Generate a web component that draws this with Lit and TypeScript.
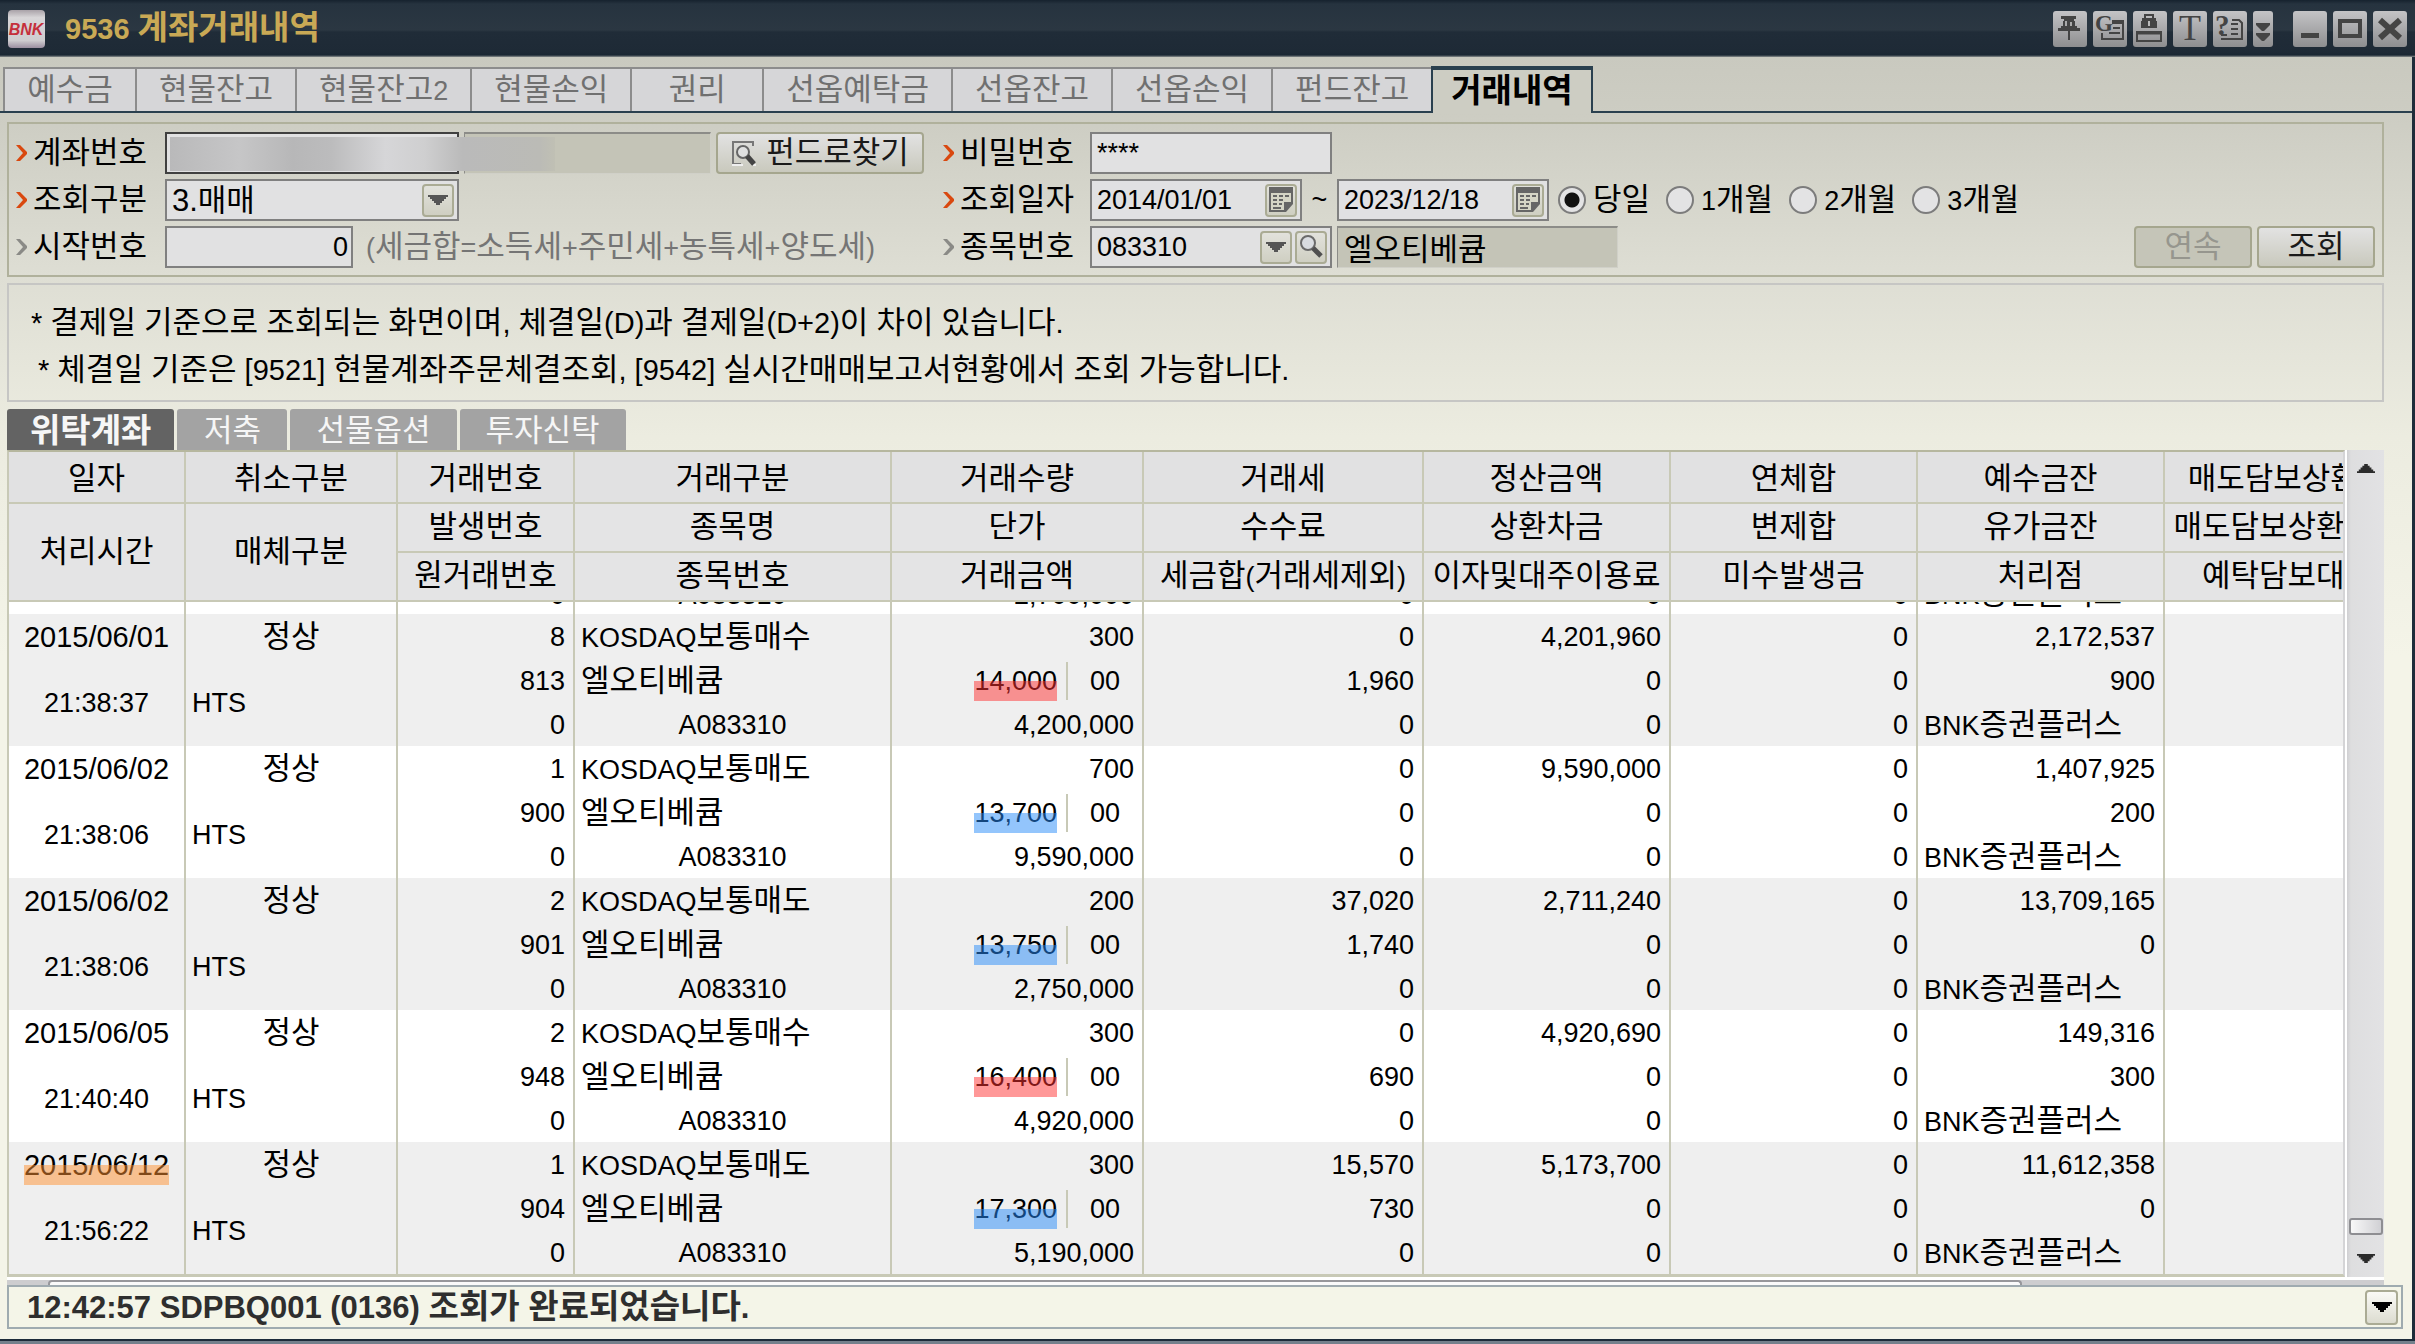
import { LitElement, html, svg, css, nothing } from "lit";
import { customElement, state } from "lit/decorators.js";
import { classMap } from "lit/directives/class-map.js";

interface Trade {
  date: string;
  time: string;
  nos: [string, string, string];
  kind: string;
  qty: string;
  price: string;
  side: "buy" | "sell";
  amount: string;
  tax: string;
  fee: string;
  settle: string;
  deposit: string;
  stock: string;
  marked?: boolean;
}

const TRADES: Trade[] = [
  { date: "2015/06/01", time: "21:38:37", nos: ["8", "813", "0"], kind: "KOSDAQ보통매수", qty: "300", price: "14,000", side: "buy", amount: "4,200,000", tax: "0", fee: "1,960", settle: "4,201,960", deposit: "2,172,537", stock: "900" },
  { date: "2015/06/02", time: "21:38:06", nos: ["1", "900", "0"], kind: "KOSDAQ보통매도", qty: "700", price: "13,700", side: "sell", amount: "9,590,000", tax: "0", fee: "0", settle: "9,590,000", deposit: "1,407,925", stock: "200" },
  { date: "2015/06/02", time: "21:38:06", nos: ["2", "901", "0"], kind: "KOSDAQ보통매도", qty: "200", price: "13,750", side: "sell", amount: "2,750,000", tax: "37,020", fee: "1,740", settle: "2,711,240", deposit: "13,709,165", stock: "0" },
  { date: "2015/06/05", time: "21:40:40", nos: ["2", "948", "0"], kind: "KOSDAQ보통매수", qty: "300", price: "16,400", side: "buy", amount: "4,920,000", tax: "0", fee: "690", settle: "4,920,690", deposit: "149,316", stock: "300" },
  { date: "2015/06/12", time: "21:56:22", nos: ["1", "904", "0"], kind: "KOSDAQ보통매도", qty: "300", price: "17,300", side: "sell", amount: "5,190,000", tax: "15,570", fee: "730", settle: "5,173,700", deposit: "11,612,358", stock: "0", marked: true },
];

const TABS = ["예수금", "현물잔고", "현물잔고2", "현물손익", "권리", "선옵예탁금", "선옵잔고", "선옵손익", "펀드잔고", "거래내역"];
const ACCOUNT_TABS = ["위탁계좌", "저축", "선물옵션", "투자신탁"];
const PERIODS = ["당일", "1개월", "2개월", "3개월"];

/* Hangul runs are set a little larger than the Latin letters and digits beside them. */
const mix = (text: string) =>
  text.split(/([\u3131-\uD79D]+)/).filter(Boolean).map((run) =>
    /[\u3131-\uD79D]/.test(run) ? html`<span class="ko">${run}</span>` : run
  );

const chevron = html`<svg class="chevron" viewBox="0 0 12 18" aria-hidden="true">
  <path d="M0 1H4L11 8V10L4 17H0L7 9Z" fill="currentColor" />
</svg>`;

const triangle = html`<svg class="tri" viewBox="0 0 20 12" aria-hidden="true">
  <path d="M0 1H20V3H18V5H16V7H14V9H12V11H8V9H6V7H4V5H2V3H0Z" fill="currentColor" />
</svg>`;

const calendar = html`<svg class="ico" viewBox="0 0 24 26" aria-hidden="true">
  <path d="M0 0H24V17L17 25H0Z" fill="#666" />
  <path d="M2 6H22V15H15V23H2Z" fill="#d5d5c6" />
  <path d="M4 9h4M10 9h4M16 9h4M4 13h4M10 13h4M4 17h4M10 17h3M4 21h8" stroke="#666" stroke-width="2" />
  <path d="M15 24V17H21Z" fill="#666" />
</svg>`;

const lens = html`<svg class="ico" viewBox="0 0 24 26" aria-hidden="true">
  <circle cx="9" cy="9" r="7" fill="#d9dce0" stroke="#6a6a6a" stroke-width="2" />
  <path d="M14 14L22 22" stroke="#505050" stroke-width="5" />
</svg>`;

const pageLens = html`<svg class="page" viewBox="0 0 26 26" aria-hidden="true">
  <path d="M22 6V2H2V24H10" fill="none" stroke="#777" stroke-width="2" />
  <path d="M1 25H12M22 25H25" stroke="#eee" stroke-width="2" />
  <circle cx="12" cy="12" r="6" fill="#dfe0e0" stroke="#666" stroke-width="2" />
  <path d="M16 16L23 24" stroke="#444" stroke-width="5" />
</svg>`;

const TOOLS = [
  { name: "고정", art: svg`<path d="M8 5H23V8H21V10H22V15H24V17H27V20H5V17H8V15H10V10H11V8H8Z" fill="#444"/><path d="M16 20V29" stroke="#444" stroke-width="2"/><path d="M13 10V15M18 11V15" stroke="#aaa" stroke-width="2"/>` },
  { name: "그룹", art: svg`<text x="2" y="20" class="glyph" font-size="23" font-weight="700">G</text><path d="M19 9H31V13H19Z" fill="#444"/><path d="M30 11V28H9V22" fill="none" stroke="#444" stroke-width="2"/><path d="M20 17H27M16 22H27" stroke="#444" stroke-width="2"/>` },
  { name: "잠금", art: svg`<path d="M12 8V4H20V8" fill="none" stroke="#444" stroke-width="2"/><path d="M9 7H23V10H24V17H8V10H9Z" fill="#444"/><path d="M16 10V15" stroke="#bbb" stroke-width="2"/><path d="M4 21H28V30H4Z" fill="none" stroke="#444" stroke-width="2"/><path d="M4 22H28" stroke="#444" stroke-width="3"/>` },
  { name: "글꼴", art: svg`<text x="17" y="29" class="glyph" font-size="36" text-anchor="middle">T</text>` },
  { name: "도움말", art: svg`<text x="2" y="24" class="glyph" font-size="29" font-weight="700">?</text><path d="M19 9H26L29 12V28H8" fill="none" stroke="#444" stroke-width="2"/><path d="M18 13H25M18 18H25M18 23H25M8 24H14" stroke="#444" stroke-width="2"/>` },
];

const WINDOW_TOOLS = [
  { name: "최소화", art: svg`<path d="M8 22H26V27H8Z" fill="#444"/>` },
  { name: "최대화", art: svg`<path d="M7 10H27V25H7Z" fill="none" stroke="#444" stroke-width="4"/>` },
  { name: "닫기", art: svg`<path d="M7 9L27 27M27 9L7 27" stroke="#444" stroke-width="6"/>` },
];

@customElement("app-root")
export class AppRoot extends LitElement {
  @state() private period = 0;
  @state() private accountTab = 0;

  static styles = css`
    :host {
      display: flex;
      flex-direction: column;
      box-sizing: border-box;
      min-height: 100vh;
      overflow: hidden;
      color: #000;
      font: 27px/44px "Liberation Sans", "Noto Sans CJK KR", sans-serif;
      white-space: nowrap;
      border-bottom: 3px solid #74808c;
    }
    * { box-sizing: border-box; }
    .ko { font-size: 31px; }
    button, input, select {
      font: inherit;
      color: inherit;
      margin: 0;
      padding: 0;
      border-radius: 0;
    }
    .bar {
      display: flex;
      align-items: center;
      height: 57px;
      padding: 0 8px;
      gap: 6px;
      background: linear-gradient(#16222e 0, #26333f 4px, #2b3742 30px, #202c38 32px, #1e2a36 52px, #1a2733 55px, #8a8f8e 57px);
    }
    .logo { width: 37px; height: 38px; }
    .title {
      flex: 1;
      margin: 0 0 0 14px;
      font-size: 29px;
      font-weight: 700;
      color: #c9a955;
    }
    .title .ko, .tab.on .ko, .sub.on .ko, .status .ko { font-size: 33px; }
    .tool {
      width: 34px;
      height: 36px;
      border: 0;
      border-radius: 3px;
      background: linear-gradient(#c4c4c6, #8e8e90);
    }
    .tool svg { display: block; width: 34px; height: 36px; }
    .tool.slim { width: 20px; margin-right: 14px; }
    .tool.slim svg { width: 20px; }
    .glyph { font-family: "Liberation Serif", serif; fill: #444; }

    .frame {
      flex: 1;
      display: flex;
      flex-direction: column;
      border-right: 3px solid #1e2c3a;
      border-bottom: 2px solid #1e2c3a;
      background: linear-gradient(#c9c9bf 0, #cdcdc3 60px, #deded4 220px, #ecece0 380px, #f4f4e8 600px);
    }
    .tabs { display: flex; height: 56px; padding: 10px 0 0 3px; background: linear-gradient(#2a404f, #2a404f) 0 100% / 100% 2px no-repeat; }
    .tab {
      min-width: 132px;
      padding: 0 22px;
      border: solid #8c8c8c;
      border-width: 2px 0 0 2px;
      margin-bottom: 2px;
      background: #d6d6d8;
      color: #707070;
      line-height: 40px;
    }
    .tab.on {
      padding: 0 18px;
      margin: -1px 0 0;
      border: solid #2a404f;
      border-width: 4px 2px 0;
      background: #cdcdc3;
      color: #000;
      font-weight: 700;
    }

    .main { flex: 1; display: flex; flex-direction: column; padding: 9px 28px 0 7px; }
    .form {
      display: flex;
      gap: 19px;
      padding: 8px 7px 7px;
      border: 2px solid #b0b19c;
    }
    .side { display: grid; grid-auto-rows: 42px; gap: 5px; }
    .line { display: flex; align-items: center; gap: 5px; line-height: 38px; }
    .label { display: flex; align-items: center; gap: 5px; width: 144px; }
    .side + .side .label { width: 142px; }
    .chevron { width: 12px; height: 18px; color: #d9480f; }
    .muted .chevron { color: #8a8a86; }
    .box {
      display: flex;
      align-items: center;
      gap: 3px;
      height: 42px;
      padding: 0 3px 0 5px;
      border: 2px solid #808080;
      background: #e1e1e2;
    }
    .box input, .box select {
      flex: 1;
      min-width: 0;
      height: 36px;
      border: 0;
      background: none;
      appearance: none;
      outline: 0;
    }
    .box select { font-size: 31px; }
    .w294 { width: 294px; }
    .w242 { width: 242px; }
    .w212 { width: 212px; }
    .w188 { width: 188px; }
    .dark { border-color: #404040; }
    .num { text-align: right; }
    .still {
      height: 42px;
      padding: 0 6px 3px;
      border: solid #8c8c88;
      border-width: 2px 1px 1px;
      border-right-color: #d0d0c8;
      border-bottom-color: #d0d0c8;
      background: #c4c4b7;
      outline: 0;
    }
    .still.a { width: 247px; }
    .still.b { width: 281px; font-size: 31px; }
    .account { position: relative; }
    .veil {
      position: absolute;
      left: 154px;
      top: 5px;
      width: 385px;
      height: 34px;
      pointer-events: none;
      background: linear-gradient(90deg, #b9b9ba, #c6c6c7 18%, #b7b7b8 32%, #bcbcbd 42%, #d6d6d8 56%, #cfcfd0 66%, #bababa 76%, #bbbbb6 96%, #c0c0b4);
    }
    .mini {
      display: grid;
      place-items: center;
      width: 32px;
      height: 33px;
      border: 2px solid #aaab94;
      border-radius: 4px;
      background: linear-gradient(#e2e2dc, #cfcfc2);
      color: #555;
    }
    .mini.fat { width: 33px; height: 35px; }
    .tri { display: block; width: 20px; height: 12px; }
    .ico { display: block; width: 24px; height: 26px; }
    .page { width: 26px; height: 26px; }
    .btn {
      display: flex;
      align-items: center;
      justify-content: center;
      gap: 9px;
      height: 42px;
      width: 118px;
      border: 2px solid #a5a68e;
      border-radius: 4px;
      background: linear-gradient(#e2e2e2, #c9c9bd);
      color: #1a1a1a;
    }
    .btn.wide { width: 208px; }
    .btn:disabled { background: #c5c5b8; color: #96968e; }
    .hint { margin-left: 8px; color: #757575; }
    .tilde { width: 25px; text-align: center; }
    .radios { display: flex; gap: 16px; margin: 0 0 0 4px; padding: 0; border: 0; }
    .radio { display: flex; align-items: center; gap: 7px; }
    .radio input {
      appearance: none;
      width: 28px;
      height: 28px;
      border: 2px solid #7c7c7c;
      border-radius: 50%;
      background: #e3e3e4;
    }
    .radio input:checked { background: radial-gradient(circle, #111 7px, #e3e3e4 8px); }
    .go { display: flex; gap: 5px; margin-left: auto; align-self: flex-end; }

    .note {
      margin-top: 6px;
      padding: 14px 22px 7px;
      border: 2px solid #c6c6c4;
      font-size: 29px;
      line-height: 47px;
    }
    .note p { margin: 0; height: 47px; }
    .note p + p { padding-left: 7px; }

    .subs { display: flex; gap: 3px; margin-top: 7px; }
    .sub {
      min-width: 110px;
      height: 41px;
      padding: 3px 26px 0;
      border: 0;
      border-radius: 3px 3px 0 0;
      background: #a3a3a3;
      color: #f6f6f6;
      line-height: 38px;
    }
    .sub.on { padding: 3px 23px 0; background: #636363; font-weight: 700; }

    .grid { display: flex; gap: 2px; background: #fff; }
    .scroller {
      flex: 1;
      min-width: 0;
      overflow: hidden;
      border: solid #c8c9b6;
      border-width: 2px 2px 3px;
      border-top-color: #b6b79f;
      border-right-color: #d4d4d6;
    }
    table { width: 2403px; table-layout: fixed; border-spacing: 0; }
    th, td { padding: 0; border-right: 2px solid #c8c9b6; overflow: hidden; text-align: center; }
    th {
      height: 49px;
      border-bottom: 2px solid #c8c9b6;
      background: #e4e4e5;
      font-weight: 400;
      line-height: 42px;
    }
    .top th { height: 52px; padding-top: 4px; background: #e1e1e2; }
    td { height: 44px; padding-top: 2px; line-height: 38px; background: #fff; }
    .odd td { background: #efefef; }
    td.r { text-align: right; padding-right: 8px; }
    td.l { text-align: left; padding-left: 6px; }
    td.date { font-size: 29px; }
    .rest td { height: 12px; padding-top: 0; }
    .tail { display: flex; flex-direction: column; justify-content: flex-end; height: 12px; overflow: hidden; line-height: 38px; }
    .price { display: flex; justify-content: flex-end; }
    .unit { width: 76px; margin-left: 9px; border-left: 2px solid #c8c9b6; text-align: center; }
    .mark { position: relative; display: inline-block; }
    .mark::after {
      content: "";
      position: absolute;
      left: 0;
      right: 0;
      top: 50%;
      height: 20px;
    }
    .buy::after { background: rgba(255, 50, 50, 0.5); }
    .sell::after { background: rgba(40, 140, 250, 0.5); }
    .day::after { background: rgba(255, 145, 50, 0.5); }

    .vbar {
      display: flex;
      flex-direction: column;
      align-items: center;
      justify-content: space-between;
      width: 37px;
      padding: 12px 0 13px;
      background: linear-gradient(90deg, #cfcfd2, #dededf 4px, #e2e2e4);
    }
    .vbar button { padding: 0; border: 0; background: none; color: #2b2b2b; height: 12px; }
    .vbar .tri { width: 18px; height: 11px; }
    .up .tri { transform: rotate(180deg); }
    .vthumb {
      width: 34px;
      height: 17px;
      margin: auto 0 17px;
      border: 2px solid #8e8e92;
      border-radius: 3px;
      background: linear-gradient(90deg, #f8f8f8, #d0d0d4);
    }
    .hbar { display: flex; height: 8px; padding: 3px 41px 0 41px; background: linear-gradient(#fff 3px, #cdcdcf 3px); }
    .hthumb { width: 86%; border: 1px solid #97979b; border-width: 2px 2px 0; border-radius: 4px 4px 0 0; background: #fafafa; }

    .status {
      display: flex;
      align-items: center;
      justify-content: space-between;
      height: 44px;
      margin: 0 9px 10px 7px;
      padding: 0 3px 0 18px;
      border: 2px solid #9fabb0;
      background: #f4f5e8;
      color: #2e2e2e;
      font-size: 31px;
      font-weight: 700;
      line-height: 40px;
    }
    .status .mini { color: #000; background: linear-gradient(#fafaf6, #dcdcd0); }
  `;

  private label(id: string, text: string, muted = false) {
    return html`<label class=${classMap({ label: true, muted })} for=${id}>${chevron}<span class="ko">${text}</span></label>`;
  }

  private tools(list: typeof TOOLS) {
    return list.map((t) => html`<button class="tool" aria-label=${t.name}><svg viewBox="0 0 34 36">${t.art}</svg></button>`);
  }

  private renderBar() {
    return html`<header class="bar">
      <svg class="logo" viewBox="0 0 37 38" role="img" aria-label="BNK">
        <defs><linearGradient id="lg" x1="0" y1="0" x2="0" y2="1">
          <stop offset="0" stop-color="#a9a2a8" /><stop offset=".2" stop-color="#d8d6d8" />
          <stop offset=".8" stop-color="#cfcdd0" /><stop offset="1" stop-color="#9b8ea0" />
        </linearGradient></defs>
        <rect width="37" height="38" rx="4" fill="url(#lg)" />
        <text x="18" y="25" text-anchor="middle" font-family="Liberation Sans" font-size="16" font-weight="700" font-style="italic" fill="#c5303c">BNK</text>
      </svg>
      <h1 class="title">${mix("9536 계좌거래내역")}</h1>
      ${this.tools(TOOLS)}
      <button class="tool slim" aria-label="더보기"><svg viewBox="0 0 20 36">
        <path d="M3 12H17V14L11 20H9L3 14ZM3 22H17V24L11 30H9L3 24Z" fill="#444" />
      </svg></button>
      ${this.tools(WINDOW_TOOLS)}
    </header>`;
  }

  private renderForm() {
    return html`<form class="form" @submit=${(e: Event) => e.preventDefault()}>
      <div class="side">
        <div class="line account">
          ${this.label("account", "계좌번호")}
          <div class="box dark w294"><input id="account" type="text" /></div>
          <input class="still a" aria-label="계좌명" readonly />
          <button class="btn wide" type="button">${pageLens}<span class="ko">펀드로찾기</span></button>
          <div class="veil"></div>
        </div>
        <div class="line">
          ${this.label("kind", "조회구분")}
          <div class="box w294">
            <select id="kind"><option>3.매매</option></select>
            <span class="mini">${triangle}</span>
          </div>
        </div>
        <div class="line">
          ${this.label("start", "시작번호", true)}
          <div class="box w188"><input id="start" class="num" type="text" value="0" /></div>
          <span class="hint">${mix("(세금합=소득세+주민세+농특세+양도세)")}</span>
        </div>
      </div>
      <div class="side">
        <div class="line">
          ${this.label("pass", "비밀번호")}
          <div class="box w242"><input id="pass" type="text" value="****" /></div>
        </div>
        <div class="line">
          ${this.label("from", "조회일자")}
          <div class="box w212"><input id="from" type="text" value="2014/01/01" /><button type="button" class="mini" aria-label="시작일 달력">${calendar}</button></div>
          <span class="tilde">~</span>
          <div class="box w212"><input aria-label="종료일" type="text" value="2023/12/18" /><button type="button" class="mini" aria-label="종료일 달력">${calendar}</button></div>
          <fieldset class="radios" aria-label="조회기간">
            ${PERIODS.map((p, i) => html`<label class="radio">
              <input type="radio" name="period" .checked=${this.period === i} @change=${() => (this.period = i)} />
              <span>${mix(p)}</span>
            </label>`)}
          </fieldset>
        </div>
        <div class="line">
          ${this.label("code", "종목번호", true)}
          <div class="box w242">
            <input id="code" type="text" value="083310" />
            <button type="button" class="mini" aria-label="목록">${triangle}</button>
            <button type="button" class="mini" aria-label="종목 찾기">${lens}</button>
          </div>
          <input class="still b" aria-label="종목명" readonly value="엘오티베큠" />
        </div>
      </div>
      <div class="go">
        <button class="btn" type="button" disabled><span class="ko">연속</span></button>
        <button class="btn" type="submit"><span class="ko">조회</span></button>
      </div>
    </form>`;
  }

  private renderTrade(t: Trade, i: number) {
    return html`<tbody class=${i % 2 ? "even" : "odd"}>
      <tr>
        <td class="date"><span class=${t.marked ? "mark day" : nothing}>${t.date}</span></td>
        <td>${mix("정상")}</td>
        <td class="r">${t.nos[0]}</td>
        <td class="l">${mix(t.kind)}</td>
        <td class="r">${t.qty}</td>
        <td class="r">${t.tax}</td>
        <td class="r">${t.settle}</td>
        <td class="r">0</td>
        <td class="r">${t.deposit}</td>
        <td></td>
      </tr>
      <tr>
        <td rowspan="2">${t.time}</td>
        <td class="l" rowspan="2">HTS</td>
        <td class="r">${t.nos[1]}</td>
        <td class="l">${mix("엘오티베큠")}</td>
        <td><div class="price"><span class="mark ${t.side}">${t.price}</span><span class="unit">00</span></div></td>
        <td class="r">${t.fee}</td>
        <td class="r">0</td>
        <td class="r">0</td>
        <td class="r">${t.stock}</td>
        <td></td>
      </tr>
      <tr>
        <td class="r">${t.nos[2]}</td>
        <td>A083310</td>
        <td class="r">${t.amount}</td>
        <td class="r">0</td>
        <td class="r">0</td>
        <td class="r">0</td>
        <td class="l">${mix("BNK증권플러스")}</td>
        <td></td>
      </tr>
    </tbody>`;
  }

  private renderTable() {
    const head = (names: string[]) => names.map((n) => html`<th scope="col">${mix(n)}</th>`);
    const tail = (cls: string, text: string) => html`<td class=${cls}><div class="tail"><span>${mix(text)}</span></div></td>`;
    return html`<table>
      <colgroup>
        ${[177, 212, 177, 317, 252, 280, 247, 247, 247, 247].map((w) => html`<col width=${w} />`)}
      </colgroup>
      <thead>
        <tr class="top">${head(["일자", "취소구분", "거래번호", "거래구분", "거래수량", "거래세", "정산금액", "연체합", "예수금잔", "매도담보상환금"])}</tr>
        <tr>
          <th scope="col" rowspan="2">${mix("처리시간")}</th>
          <th scope="col" rowspan="2">${mix("매체구분")}</th>
          ${head(["발생번호", "종목명", "단가", "수수료", "상환차금", "변제합", "유가금잔", "매도담보상환차금"])}
        </tr>
        <tr>${head(["원거래번호", "종목번호", "거래금액", "세금합(거래세제외)", "이자및대주이용료", "미수발생금", "처리점", "예탁담보대출"])}</tr>
      </thead>
      <tbody class="rest">
        <tr>
          <td></td><td></td>
          ${tail("r", "0")}${tail("", "A083310")}${tail("r", "2,700,000")}${tail("r", "0")}${tail("r", "0")}${tail("r", "0")}${tail("l", "BNK증권플러스")}
          <td></td>
        </tr>
      </tbody>
      ${TRADES.map((t, i) => this.renderTrade(t, i))}
    </table>`;
  }

  render() {
    return html`
      ${this.renderBar()}
      <div class="frame">
        <nav class="tabs">
          ${TABS.map((t, i) => html`<button class=${classMap({ tab: true, on: i === TABS.length - 1 })}>${mix(t)}</button>`)}
        </nav>
        <main class="main">
          ${this.renderForm()}
          <section class="note">
            <p>${mix("* 결제일 기준으로 조회되는 화면이며, 체결일(D)과 결제일(D+2)이 차이 있습니다.")}</p>
            <p>${mix("* 체결일 기준은 [9521] 현물계좌주문체결조회, [9542] 실시간매매보고서현황에서 조회 가능합니다.")}</p>
          </section>
          <nav class="subs">
            ${ACCOUNT_TABS.map((t, i) => html`<button class=${classMap({ sub: true, on: this.accountTab === i })} @click=${() => (this.accountTab = i)}>${mix(t)}</button>`)}
          </nav>
          <div class="grid">
            <div class="scroller">${this.renderTable()}</div>
            <div class="vbar">
              <button class="up" aria-label="위로">${triangle}</button>
              <div class="vthumb"></div>
              <button aria-label="아래로">${triangle}</button>
            </div>
          </div>
          <div class="hbar"><div class="hthumb"></div></div>
        </main>
        <footer class="status">
          <span>${mix("12:42:57 SDPBQ001 (0136) 조회가 완료되었습니다.")}</span>
          <button class="mini fat" aria-label="메시지 목록">${triangle}</button>
        </footer>
      </div>
    `;
  }
}
